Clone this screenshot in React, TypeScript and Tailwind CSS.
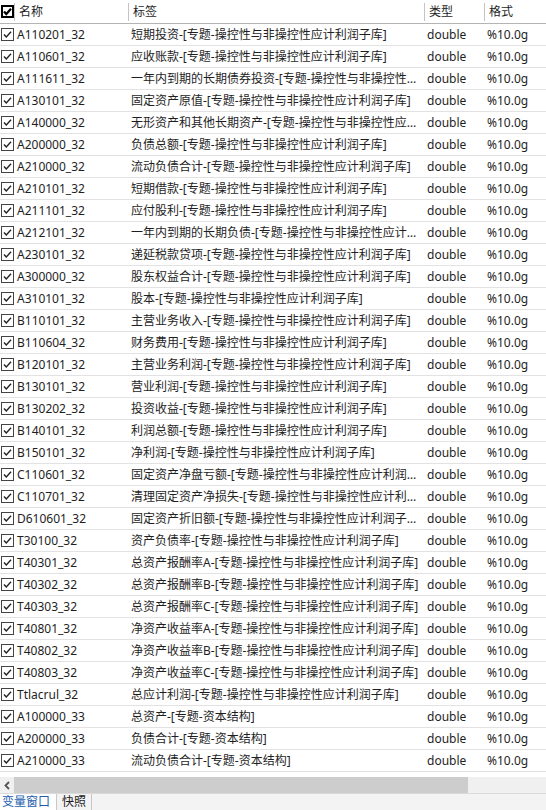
import React from 'react';

const SUB = '-[专题-操控性与非操控性应计利润子库]';
const CAP = '-[专题-资本结构]';

const ROWS: [string, string][] = [
  ['A110201_32', '短期投资' + SUB],
  ['A110601_32', '应收账款' + SUB],
  ['A111611_32', '一年内到期的长期债券投资' + SUB],
  ['A130101_32', '固定资产原值' + SUB],
  ['A140000_32', '无形资产和其他长期资产' + SUB],
  ['A200000_32', '负债总额' + SUB],
  ['A210000_32', '流动负债合计' + SUB],
  ['A210101_32', '短期借款' + SUB],
  ['A211101_32', '应付股利' + SUB],
  ['A212101_32', '一年内到期的长期负债' + SUB],
  ['A230101_32', '递延税款贷项' + SUB],
  ['A300000_32', '股东权益合计' + SUB],
  ['A310101_32', '股本' + SUB],
  ['B110101_32', '主营业务收入' + SUB],
  ['B110604_32', '财务费用' + SUB],
  ['B120101_32', '主营业务利润' + SUB],
  ['B130101_32', '营业利润' + SUB],
  ['B130202_32', '投资收益' + SUB],
  ['B140101_32', '利润总额' + SUB],
  ['B150101_32', '净利润' + SUB],
  ['C110601_32', '固定资产净盘亏额' + SUB],
  ['C110701_32', '清理固定资产净损失' + SUB],
  ['D610601_32', '固定资产折旧额' + SUB],
  ['T30100_32', '资产负债率' + SUB],
  ['T40301_32', '总资产报酬率A' + SUB],
  ['T40302_32', '总资产报酬率B' + SUB],
  ['T40303_32', '总资产报酬率C' + SUB],
  ['T40801_32', '净资产收益率A' + SUB],
  ['T40802_32', '净资产收益率B' + SUB],
  ['T40803_32', '净资产收益率C' + SUB],
  ['Ttlacrul_32', '总应计利润' + SUB],
  ['A100000_33', '总资产' + CAP],
  ['A200000_33', '负债合计' + CAP],
  ['A210000_33', '流动负债合计' + CAP],
];

function Check({ bold }: { bold?: boolean }) {
  return (
    <svg width="13" height="13" viewBox="0 0 13 13" className="block">
      <rect
        x={bold ? 1 : 0.5}
        y={bold ? 1 : 0.5}
        width={bold ? 11 : 12}
        height={bold ? 11 : 12}
        fill="#fff"
        stroke={bold ? '#000' : '#444'}
        strokeWidth={bold ? 2 : 1}
      />
      <path
        d="M3 6.5 L5.3 9 L10 3.8"
        fill="none"
        stroke={bold ? '#000' : '#222'}
        strokeWidth={bold ? 2.2 : 1.4}
      />
    </svg>
  );
}

function HeadCell({ label, w }: { label: string; w: string }) {
  return (
    <div className={`flex items-center h-full shrink-0 ${w}`}>
      <span className="h-[18px] w-px bg-[#c4c4c4]" />
      <span className="pl-[4px]">{label}</span>
    </div>
  );
}

export default function App() {
  return (
    <div
      className="w-[546px] h-[810px] flex flex-col bg-white text-[12px] text-[#1e1e1e] overflow-hidden select-none"
      style={{ fontFamily: '"Noto Sans", "Noto Sans CJK SC", sans-serif' }}
    >
      {/* header */}
      <div className="flex h-[24px] border-b border-[#b4b4b4] shrink-0">
        <div className="w-[14px] shrink-0 flex items-center pl-[1px]">
          <Check bold />
        </div>
        <HeadCell label="名称" w="w-[114px]" />
        <HeadCell label="标签" w="w-[296px]" />
        <HeadCell label="类型" w="w-[60px]" />
        <HeadCell label="格式" w="w-[62px]" />
      </div>

      {/* rows */}
      <div className="flex-1 overflow-hidden">
        {ROWS.map(([name, label]) => (
          <div key={name} className="flex h-[22px] items-center border-b border-[#e2e2e2]">
            <div className="w-[14px] shrink-0 pl-[1px]">
              <Check />
            </div>
            <div className="w-[114px] shrink-0 pl-[3px] truncate">{name}</div>
            <div className="w-[296px] shrink-0 pl-[3px] pr-[4px] truncate">{label}</div>
            <div className="w-[60px] shrink-0 pl-[3px]">double</div>
            <div className="w-[62px] shrink-0 pl-[3px]">%10.0g</div>
          </div>
        ))}
      </div>

      {/* horizontal scrollbar */}
      <div className="flex h-[16px] bg-[#f0f0f0] shrink-0">
        <div className="w-[14px] flex items-center justify-center">
          <svg width="8" height="9" viewBox="0 0 8 9">
            <path d="M6 1 L2.5 4.5 L6 8" fill="none" stroke="#555" strokeWidth="1.8" />
          </svg>
        </div>
        <div className="w-[454px] bg-[#cdcdcd]" />
      </div>

      {/* bottom tabs */}
      <div className="flex h-[17px] bg-[#f3f3f3] border-t border-[#dadada] shrink-0 text-[12px] leading-[16px]">
        <div className="w-[57px] pl-[2px] text-[#1d5fae] bg-white border-r border-[#c8c8c8]">变量窗口</div>
        <div className="w-[35px] pl-[5px] border-r border-[#c8c8c8]">快照</div>
      </div>
    </div>
  );
}
